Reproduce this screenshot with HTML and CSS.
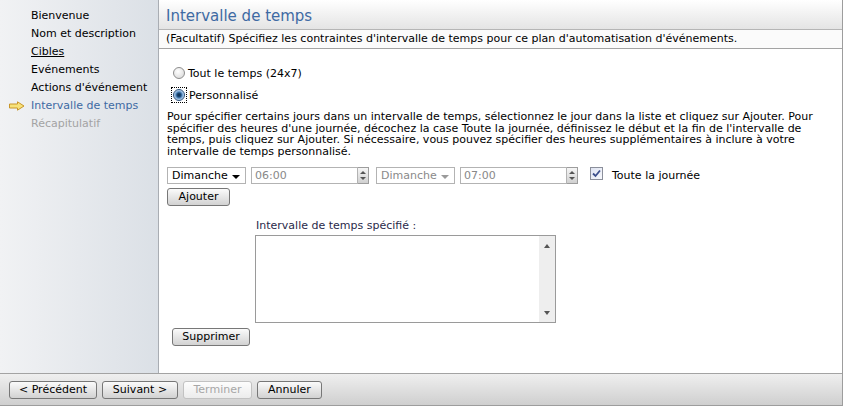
FILE: index.html
```html
<!DOCTYPE html>
<html>
<head>
    <title>Intervalle de temps</title>
    <link rel="stylesheet" href="styles.css">
</head>
<body>
    <div class="wizard">
        <div class="wizard-body">
            <ul class="steps">
                <li>Bienvenue</li>
                <li>Nom et description</li>
                <li class="link">Cibles</li>
                <li>Evénements</li>
                <li>Actions d'événement</li>
                <li class="current">
                    <svg class="step-arrow" width="16" height="10" viewBox="0 0 16 10">
                        <path d="M0.5 3 H8.5 V0.8 L15 5 L8.5 9.2 V7 H0.5 Z" fill="#f7e27a" stroke="#c8962a" stroke-width="1"/>
                    </svg>
                    Intervalle de temps
                </li>
                <li class="disabled">Récapitulatif</li>
            </ul>
            <div class="page">
                <div class="page-header">
                    <h1 class="page-title">Intervalle de temps</h1>
                    <p class="page-subtitle">(Facultatif) Spécifiez les contraintes d'intervalle de temps pour ce plan d'automatisation d'événements.</p>
                </div>
                <div class="page-content">
                    <label class="radio-row">
                        <input type="radio" name="range" class="radio">
                        <span>Tout le temps (24x7)</span>
                    </label>
                    <label class="radio-row">
                        <span class="focus-ring"><input type="radio" name="range" class="radio" checked></span>
                        <span>Personnalisé</span>
                    </label>
                    <p class="help">Pour spécifier certains jours dans un intervalle de temps, sélectionnez le jour dans la liste et cliquez sur Ajouter. Pour spécifier des heures d'une journée, décochez la case Toute la journée, définissez le début et la fin de l'intervalle de temps, puis cliquez sur Ajouter. Si nécessaire, vous pouvez spécifier des heures supplémentaires à inclure à votre intervalle de temps personnalisé.</p>
                    <div class="range-row">
                        <div class="select"><span>Dimanche</span><span class="caret"></span></div>
                        <div class="time">
                            <span class="time-value">06:00</span>
                            <span class="spin"><span class="spin-up"></span><span class="spin-down"></span></span>
                        </div>
                        <div class="select disabled"><span>Dimanche</span><span class="caret"></span></div>
                        <div class="time">
                            <span class="time-value">07:00</span>
                            <span class="spin"><span class="spin-up"></span><span class="spin-down"></span></span>
                        </div>
                        <label class="check-row">
                            <span class="checkbox">
                                <svg width="9" height="9" viewBox="0 0 9 9"><path d="M1 4.5 L3.5 7 L8 1.5" fill="none" stroke="#3c4f8c" stroke-width="1.8"/></svg>
                            </span>
                            Toute la journée
                        </label>
                    </div>
                    <button class="btn add-btn">Ajouter</button>
                    <div class="list-block">
                        <div class="list-label">Intervalle de temps spécifié :</div>
                        <div class="list-box">
                            <div class="list-items"></div>
                            <div class="scrollbar">
                                <span class="scroll-up"></span>
                                <span class="scroll-down"></span>
                            </div>
                        </div>
                    </div>
                    <button class="btn remove-btn">Supprimer</button>
                </div>
            </div>
        </div>
        <div class="wizard-footer">
            <button class="btn prev-btn">&lt; Précédent</button>
            <button class="btn next-btn">Suivant &gt;</button>
            <button class="btn finish-btn" disabled>Terminer</button>
            <button class="btn cancel-btn">Annuler</button>
        </div>
    </div>
</body>
</html>
```

FILE: styles.css
```css
body {
    margin: 0;
    padding: 0;
    background: #fff;
    font-family: "DejaVu Sans", Verdana, sans-serif;
    font-size: 11px;
    color: #000;
}
.wizard {
    width: 842px;
    height: 405px;
    border-right: 1px solid #9d9d9d;
    border-bottom: 1px solid #9d9d9d;
    display: flex;
    flex-direction: column;
}
.wizard-body {
    flex: 1;
    display: flex;
}
.steps {
    width: 158px;
    margin: 0;
    padding: 7px 0 0 0;
    list-style: none;
    background: linear-gradient(to right, #f1f2f4, #dbe0e6);
    border-right: 1px solid #a9adb3;
}
.steps li {
    height: 18px;
    line-height: 18px;
    padding-left: 31px;
    position: relative;
    white-space: nowrap;
}
.steps li.link {
    text-decoration: underline;
}
.steps li.current {
    color: #3e6aa3;
}
.steps li.disabled {
    color: #a3a3a3;
}
.step-arrow {
    position: absolute;
    left: 9px;
    top: 4px;
}
.page {
    flex: 1;
    display: flex;
    flex-direction: column;
}
.page-header {
    border-bottom: 1px solid #a3a3a3;
}
.page-title {
    margin: 0;
    height: 29px;
    line-height: 33px;
    padding-left: 7px;
    font-size: 15px;
    font-weight: normal;
    color: #3e6aa3;
    background: linear-gradient(#ffffff, #e4e4e4);
    border-bottom: 1px solid #b5b5b5;
}
.page-subtitle {
    margin: 0;
    height: 18px;
    line-height: 18px;
    padding-left: 7px;
    background: #fbfbfb;
}
.page-content {
    padding: 13px 0 0 8px;
    display: flex;
    flex-direction: column;
    align-items: flex-start;
}
.radio-row {
    height: 22px;
    display: flex;
    align-items: center;
    padding-left: 6px;
    gap: 3px;
}
.radio {
    appearance: none;
    width: 12px;
    height: 12px;
    margin: 0;
    border: 1px solid #8d8d8d;
    border-radius: 50%;
    background: radial-gradient(circle at 40% 35%, #ffffff, #d4d4d4);
}
.radio:checked {
    border-color: #2b4f7a;
    background: radial-gradient(circle, #0d2a4a 0, #1d4d7c 2px, #6e9fd0 3.5px, #c6d9ee 5px);
}
.focus-ring {
    display: flex;
    padding: 1px;
    outline: 1px dotted #000;
    margin-left: -1px;
}
.help {
    margin: 5px 0 0 0;
    width: 668px;
    line-height: 11.7px;
}
.range-row {
    margin-top: 9px;
    display: flex;
    align-items: center;
    height: 17px;
}
.select {
    height: 15px;
    border: 1px solid #b3b3b3;
    display: flex;
    align-items: center;
    justify-content: space-between;
    padding-left: 4px;
    width: 73px;
}
.select.disabled {
    color: #8a8a8a;
    margin-left: 7px;
}
.caret {
    width: 0;
    height: 0;
    margin: 3px 5px 0 0;
    border-left: 4px solid transparent;
    border-right: 4px solid transparent;
    border-top: 4px solid #000;
}
.select.disabled .caret {
    border-top-color: #9a9a9a;
}
.time {
    margin-left: 5px;
    display: flex;
    align-items: center;
}
.time-value {
    width: 102px;
    height: 15px;
    line-height: 15px;
    border: 1px solid #b3b3b3;
    padding-left: 3px;
    color: #888;
}
.spin {
    width: 10px;
    height: 15px;
    border: 1px solid #9d9d9d;
    border-left: none;
    background: linear-gradient(#f6f6f6, #d0d0d0);
    display: flex;
    flex-direction: column;
    align-items: center;
    justify-content: space-evenly;
}
.spin-up, .spin-down {
    width: 0;
    height: 0;
    border-left: 3px solid transparent;
    border-right: 3px solid transparent;
}
.spin-up {
    border-bottom: 3px solid #555;
}
.spin-down {
    border-top: 3px solid #555;
}
.check-row {
    margin-left: 12px;
    display: flex;
    align-items: center;
    gap: 9px;
}
.checkbox {
    width: 11px;
    height: 11px;
    margin-top: -4px;
    border: 1px solid #8b8f9b;
    background: linear-gradient(135deg, #dfe4f2, #f7f8fc);
    display: flex;
    align-items: center;
    justify-content: center;
}
.btn {
    font-family: inherit;
    font-size: 11px;
    color: #000;
    height: 18px;
    padding: 0 4px;
    border: 1px solid #777;
    border-radius: 3px;
    background: linear-gradient(#fbfbfb, #e6e6e6 50%, #d2d2d2);
}
.btn:disabled {
    color: #a7a7a7;
    border-color: #c2c2c2;
    background: linear-gradient(#fdfdfd, #ececec);
}
.add-btn {
    margin-top: 4px;
    width: 63px;
}
.list-block {
    margin: 14px 0 0 88px;
}
.list-label {
    color: #2a2a4a;
    padding-left: 1px;
    height: 12px;
    line-height: 12px;
}
.list-box {
    margin-top: 3px;
    width: 299px;
    height: 86px;
    border: 1px solid #9a9a9a;
    display: flex;
}
.list-items {
    flex: 1;
}
.scrollbar {
    width: 16px;
    background: #eeeeee;
    display: flex;
    flex-direction: column;
    justify-content: space-between;
    align-items: center;
    padding: 8px 0 7px;
}
.scroll-up, .scroll-down {
    width: 0;
    height: 0;
    border-left: 3px solid transparent;
    border-right: 3px solid transparent;
}
.scroll-up {
    border-bottom: 4px solid #555;
}
.scroll-down {
    border-top: 4px solid #555;
}
.remove-btn {
    margin: 5px 0 0 5px;
    width: 78px;
}
.wizard-footer {
    height: 31px;
    border-top: 1px solid #a3a3a3;
    background: linear-gradient(#efefef, #cfcfcf);
    display: flex;
    align-items: center;
    gap: 5px;
    padding-left: 9px;
}
.prev-btn {
    width: 88px;
}
.next-btn {
    width: 76px;
}
.finish-btn {
    width: 69px;
}
.cancel-btn {
    width: 65px;
}
```
